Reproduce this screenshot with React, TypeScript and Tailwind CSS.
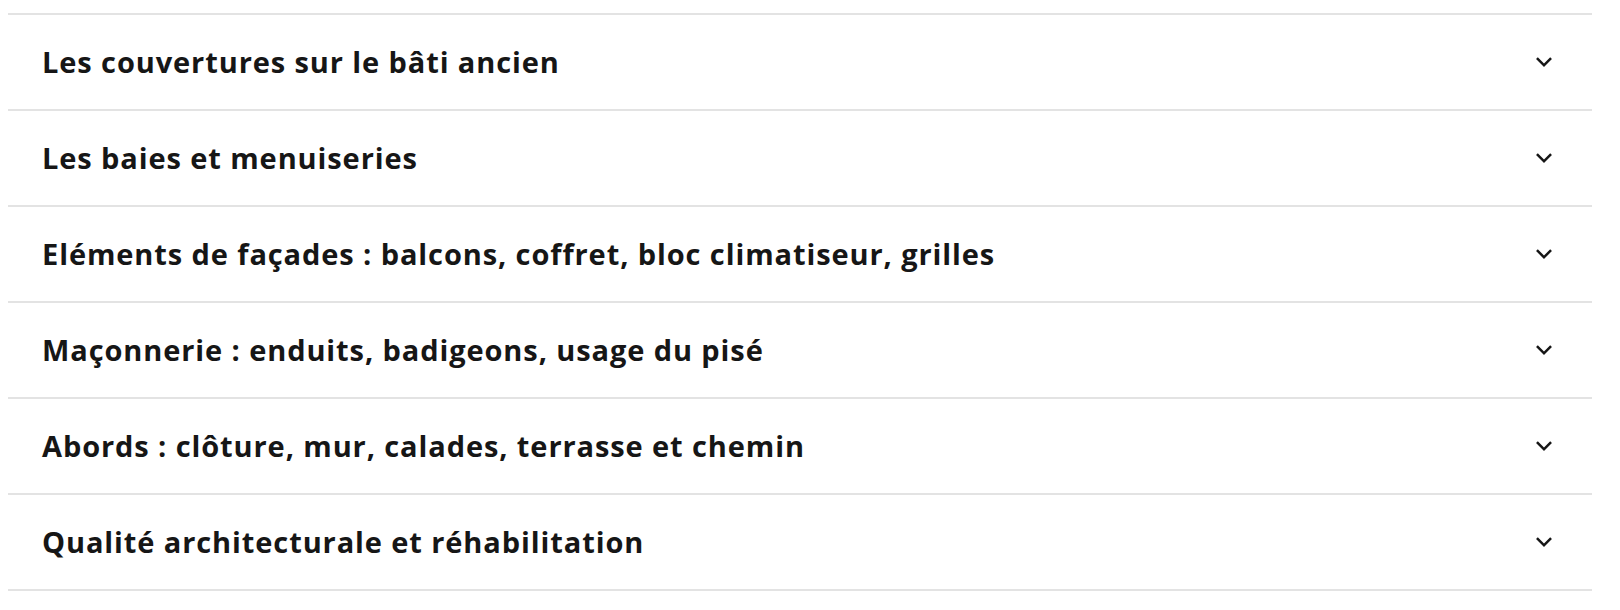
import React from "react";
import { RiArrowDownSLine } from "react-icons/ri";

const items = [
  "Les couvertures sur le bâti ancien",
  "Les baies et menuiseries",
  "Eléments de façades : balcons, coffret, bloc climatiseur, grilles",
  "Maçonnerie : enduits, badigeons, usage du pisé",
  "Abords : clôture, mur, calades, terrasse et chemin",
  "Qualité architecturale et réhabilitation",
];

export default function App() {
  return (
    <div className="w-[1620px] h-[610px] bg-white pt-[13px] pl-[8px]" style={{ fontFamily: "'Open Sans', 'Noto Sans', sans-serif" }}>
      <div className="w-[1584px] flex flex-col border-b-2 border-[#e3e3e3]">
        {items.map((t) => (
          <div key={t} className="border-t-2 border-[#e3e3e3]">
            <button className="w-full h-[94px] flex items-center justify-between pl-[34px] pr-[33px] text-left">
              <span className="text-[29px] font-bold text-[#161616] tracking-[0.9px]">{t}</span>
              <RiArrowDownSLine size={30} color="#161616" />
            </button>
          </div>
        ))}
      </div>
    </div>
  );
}
